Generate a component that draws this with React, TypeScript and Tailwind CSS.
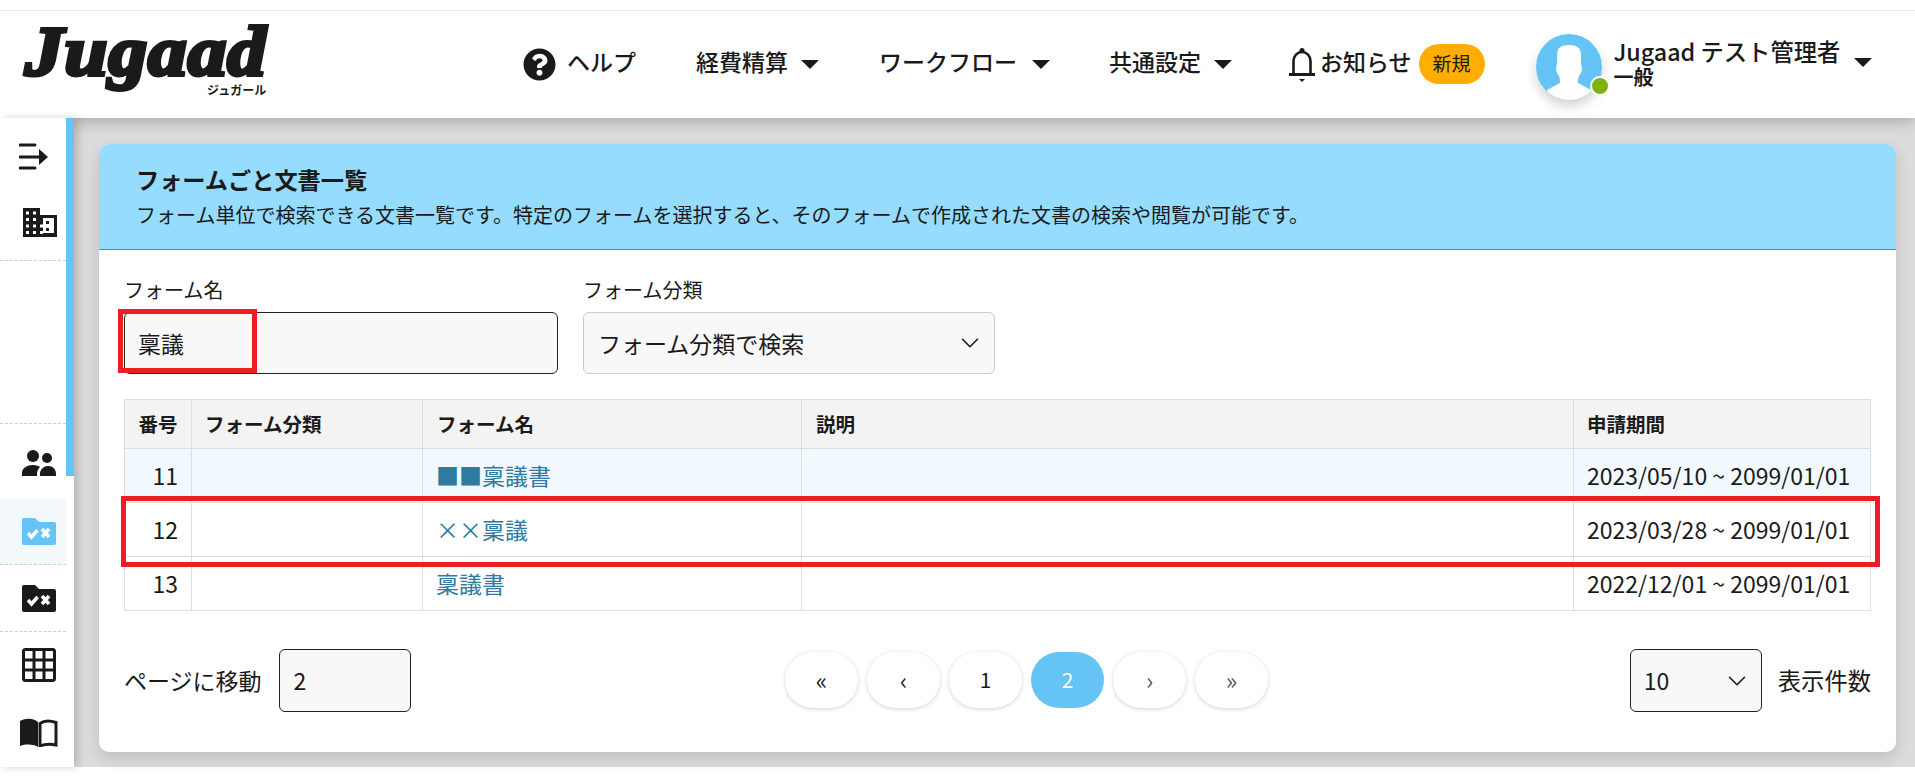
import { ChevronDown } from "lucide-react"
import { FaQuestionCircle } from "react-icons/fa"

const rows = [
  { no: 11, name: "■■稟議書", period: "2023/05/10 ~ 2099/01/01", bg: "bg-[#f1f9fe]" },
  { no: 12, name: "××稟議", period: "2023/03/28 ~ 2099/01/01", bg: "bg-white" },
  { no: 13, name: "稟議書", period: "2022/12/01 ~ 2099/01/01", bg: "bg-white" },
]

function Caret() {
  return <span className="w-0 h-0 border-l-[9px] border-r-[9px] border-t-[9px] border-l-transparent border-r-transparent border-t-[#1a1a1a]" />
}

function Avatar() {
  return (
    <div className="relative w-[66px] h-[66px] rounded-full shadow-[0_6px_12px_rgba(0,0,0,0.18)]">
      <svg viewBox="0 0 66 66" className="w-[66px] h-[66px]">
        <clipPath id="av">
          <circle cx="33" cy="33" r="33" />
        </clipPath>
        <g clipPath="url(#av)">
          <rect width="66" height="66" fill="#65c4f5" />
          <path
            d="M33 11c-8 0-12 3-12 10v7c0 3-1 5-1 7 0 3 2 5 3 7 1 3 1 5 1 7l-13 7v10h44V56l-13-7c0-2 0-4 1-7 1-2 3-4 3-7 0-2-1-4-1-7v-7c0-7-4-10-12-10z"
            fill="#fff"
          />
        </g>
      </svg>
      <span className="absolute left-[54px] top-[42px] w-[20px] h-[20px] rounded-full bg-[#7cb30f] border-2 border-white" />
    </div>
  )
}

function Header() {
  return (
    <header className="relative z-10 h-[108px] shrink-0 bg-white border-t border-[#e5e5e5] shadow-[0_2px_16px_rgba(0,0,0,0.28)] flex items-center text-[#1a1a1a]">
      <div className="w-[523px] shrink-0 pl-[25px] h-full relative overflow-hidden">
        <div className="font-['Liberation_Serif',serif] italic font-bold text-[70px] leading-[74px] tracking-[1px] mt-[4px] origin-left scale-x-[1.1] [-webkit-text-stroke:4px_#1a1a1a]">
          Jugaad
        </div>
        <div className="absolute left-[207px] top-[72px] text-[12px] leading-[14px] font-bold">ジュガール</div>
      </div>
      <FaQuestionCircle className="w-[33px] h-[33px] text-[#1a1a1a]" />
      <span className="ml-[11px] pb-[6px] text-[23px] font-medium w-[129px]">ヘルプ</span>
      <span className="pb-[6px] text-[23px] font-medium">経費精算</span>
      <span className="ml-[13px] mr-[60px] flex"><Caret /></span>
      <span className="pb-[6px] text-[23px] font-medium">ワークフロー</span>
      <span className="ml-[15px] mr-[59px] flex"><Caret /></span>
      <span className="pb-[6px] text-[23px] font-medium">共通設定</span>
      <span className="ml-[13px] mr-[57px] flex"><Caret /></span>
      <svg viewBox="0 0 26 36" className="w-[26px] h-[36px]">
        <path d="M4.5 27V14a8.5 9 0 0117 0v13" fill="none" stroke="currentColor" strokeWidth="2.6" />
        <circle cx="13" cy="3.5" r="2.5" fill="currentColor" />
        <path d="M0 26h26v3H0z" fill="currentColor" />
        <path d="M10 32h6l-3 3z" fill="currentColor" />
      </svg>
      <span className="ml-[5px] pb-[6px] text-[23px] font-medium">お知らせ</span>
      <span className="ml-[7px] w-[66px] h-[40px] mb-[2px] rounded-full bg-[#ffad00] flex items-center justify-center text-[19px]">新規</span>
      <div className="ml-[51px] mt-[4px]"><Avatar /></div>
      <div className="ml-[12px] flex flex-col w-[240px] -mt-[6px]">
        <span className="text-[23.3px] leading-[30px] font-medium whitespace-nowrap">Jugaad テスト管理者</span>
        <span className="text-[20px] leading-[22px] font-bold">一般</span>
      </div>
      <span className="flex -mt-[4px]"><Caret /></span>
    </header>
  )
}

function Sidebar() {
  return (
    <aside className="relative z-20 w-[74px] shrink-0 bg-white flex shadow-[4px_0_8px_rgba(0,0,0,0.18)]">
      <div className="w-[66px] flex flex-col text-[#1a1a1a]">
        <div className="h-[143px] border-b border-dashed border-[#ccc] flex flex-col pl-[19px]">
          <svg viewBox="0 0 30 28" className="w-[30px] h-[28px] mt-[25px]">
            <path d="M1 2h15M1 14h22M1 25h15" stroke="currentColor" strokeWidth="3" strokeLinecap="round" fill="none" />
            <path d="M20 6l9 8-9 8z" fill="currentColor" />
          </svg>
          <svg viewBox="0 0 34 29" className="w-[34px] h-[29px] mt-[37px] ml-[4px]">
            <path
              fillRule="evenodd"
              fill="currentColor"
              d="M0 0h17v7h17v22H0zM3 3.5v3h3v-3zm7 0v3h3v-3zM3 10v3h3v-3zm7 0v3h3v-3zM3 16.5v3h3v-3zm7 0v3h3v-3zm7 0v3h3v-3zM3 23v3h3v-3zm7 0v3h3v-3zm7 0v3h3v-3zM20 10v15h11V10z"
            />
            <path d="M23 13h3v3h-3zM23 20h3v3h-3z" fill="currentColor" />
          </svg>
        </div>
        <div className="h-[163px] border-b border-dashed border-[#ccc]" />
        <div className="h-[75px] flex items-center pl-[22px]">
          <svg viewBox="0 0 34 26" className="w-[34px] h-[26px] mt-[3px]">
            <circle cx="11" cy="6" r="6" fill="currentColor" />
            <circle cx="25" cy="8" r="5" fill="currentColor" />
            <path d="M0 26v-3c0-5 5-8 11-8 3 0 6 1 7 2-2 2-3 4-3 7v2zM18 26v-2c0-5 4-8 8-8 5 0 8 3 8 8v2z" fill="currentColor" />
          </svg>
        </div>
        <div className="h-[66px] bg-[#f3f9fb] border-b border-dashed border-[#ccc] flex items-center pl-[22px]">
          <svg viewBox="0 0 34 27" className="w-[34px] h-[27px]">
            <path d="M2 0h11l4 4h15a2 2 0 012 2v19a2 2 0 01-2 2H2a2 2 0 01-2-2V2a2 2 0 012-2z" fill="#65c4f5" />
            <path d="M6 15l3.5 4 6-7M20 11l7 8M27 11l-7 8" stroke="#fff" strokeWidth="3.5" fill="none" />
          </svg>
        </div>
        <div className="h-[67px] border-b border-dashed border-[#ccc] flex items-center pl-[22px]">
          <svg viewBox="0 0 34 27" className="w-[34px] h-[27px]">
            <path d="M2 0h11l4 4h15a2 2 0 012 2v19a2 2 0 01-2 2H2a2 2 0 01-2-2V2a2 2 0 012-2z" fill="currentColor" />
            <path d="M6 15l3.5 4 6-7M20 11l7 8M27 11l-7 8" stroke="#fff" strokeWidth="3.5" fill="none" />
          </svg>
        </div>
        <div className="pl-[22px] pt-[16px]">
          <svg viewBox="0 0 34 34" className="w-[34px] h-[34px]">
            <rect x="1.5" y="1.5" width="31" height="31" rx="2" fill="none" stroke="currentColor" strokeWidth="3" />
            <path d="M12 2v30M22 2v30M2 12h30M2 22h30" stroke="currentColor" strokeWidth="3" />
          </svg>
        </div>
        <div className="pl-[20px] pt-[36px]">
          <svg viewBox="0 0 38 29" className="w-[38px] h-[29px]">
            <path d="M0 3c6-3 13-3 18 1v25c-5-3-12-3-18-1z" fill="currentColor" />
            <path d="M20 5.5c4-3 10-3 16-1V27c-5-1-11-1-16 1z" fill="none" stroke="currentColor" strokeWidth="3" />
          </svg>
        </div>
      </div>
      <div className="w-[8px]">
        <div className="h-[358px] bg-[#65c4f5]" />
      </div>
    </aside>
  )
}

function Pagination() {
  const base = "w-[73px] h-[56px] rounded-full flex items-center justify-center bg-white shadow-[0_1px_4px_rgba(0,0,0,0.18)]"
  return (
    <div className="flex gap-[9px] absolute left-[661px] top-[3px]">
      <div className={base + " text-[#1a1a1a] text-[24px]"}>«</div>
      <div className={base + " text-[#1a1a1a] text-[24px]"}>‹</div>
      <div className={base + " text-[#1a1a1a] text-[21px]"}>1</div>
      <div className="w-[73px] h-[56px] rounded-full flex items-center justify-center bg-[#65c4f5] text-white text-[21px]">2</div>
      <div className={base + " text-[#555] text-[24px]"}>›</div>
      <div className={base + " text-[#555] text-[24px]"}>»</div>
    </div>
  )
}

export default function App() {
  return (
    <div className="h-screen overflow-hidden bg-white flex flex-col font-['Noto_Sans_CJK_JP','Noto_Sans',sans-serif] text-[#1a1a1a]">
      <div className="relative z-20 h-[10px] shrink-0 bg-white" />
      <Header />
      <div className="h-[649px] shrink-0 flex">
        <Sidebar />
        <main className="flex-1 bg-[#dcdcdc] pt-[26px] pl-[25px] pr-[20px]">
          <div className="h-[608px] bg-white rounded-[10px] overflow-hidden shadow-[0_6px_16px_rgba(0,0,0,0.14)]">
            <div className="h-[106px] bg-[#96dcff] border-b border-[#3a94c8] pl-[37px] pt-[19px]">
              <h1 className="text-[23.2px] leading-[32px] font-bold">フォームごと文書一覧</h1>
              <p className="text-[20px] leading-[32px] mt-[4px] whitespace-nowrap">フォーム単位で検索できる文書一覧です。特定のフォームを選択すると、そのフォームで作成された文書の検索や閲覧が可能です。</p>
            </div>
            <div className="pl-[25px] pr-[25px] pt-[24px]">
              <div className="flex gap-[25px]">
                <div>
                  <label className="block text-[20px] leading-[32px] mb-[6px]">フォーム名</label>
                  <div className="relative">
                    <div className="w-[434px] h-[62px] rounded-[6px] border border-[#222] bg-[#f8f8f8] pl-[13px] flex items-center text-[23px]">稟議</div>
                    <div className="absolute -left-[6px] -top-[3px] w-[139px] h-[64px] border-[5px] border-[#ee1c25]" />
                  </div>
                </div>
                <div>
                  <label className="block text-[20px] leading-[32px] mb-[6px]">フォーム分類</label>
                  <div className="w-[412px] h-[62px] rounded-[6px] border border-[#ccc] bg-[#f8f8f8] pl-[14px] pr-[9px] flex items-center justify-between text-[23px]">
                    フォーム分類で検索
                    <ChevronDown className="w-[30px] h-[30px]" strokeWidth={1.3} />
                  </div>
                </div>
              </div>
              <div className="relative mt-[25px]">
                <table className="table-fixed border-collapse w-[1746px]">
                  <colgroup>
                    <col className="w-[67px]" />
                    <col className="w-[231px]" />
                    <col className="w-[379px]" />
                    <col className="w-[772px]" />
                    <col className="w-[297px]" />
                  </colgroup>
                  <thead>
                    <tr className="h-[49px] bg-[#f3f3f3] text-[19.5px] font-bold text-left">
                      <th className="border border-[#dedede] text-center">番号</th>
                      <th className="border border-[#dedede] pl-[13px]">フォーム分類</th>
                      <th className="border border-[#dedede] pl-[14px]">フォーム名</th>
                      <th className="border border-[#dedede] pl-[14px]">説明</th>
                      <th className="border border-[#dedede] pl-[13px]">申請期間</th>
                    </tr>
                  </thead>
                  <tbody>
                    {rows.map((r) => (
                      <tr key={r.no} className={"h-[54px] text-[23px] " + r.bg}>
                        <td className="border border-[#dedede] text-right pr-[13px]">{r.no}</td>
                        <td className="border border-[#dedede]" />
                        <td className="border border-[#dedede] pl-[13px] text-[#2e7aa0]">{r.name}</td>
                        <td className="border border-[#dedede]" />
                        <td className="border border-[#dedede] pl-[13px] whitespace-nowrap">{r.period}</td>
                      </tr>
                    ))}
                  </tbody>
                </table>
                <div className="absolute -left-[3px] top-[97px] w-[1759px] h-[71px] border-[5px] border-[#ee1c25]" />
              </div>
              <div className="relative mt-[38px] flex items-center justify-between h-[63px]">
                <div className="flex items-center">
                  <span className="text-[23px]">ページに移動</span>
                  <div className="ml-[17px] w-[132px] h-[63px] rounded-[6px] border border-[#222] bg-[#f8f8f8] pl-[14px] flex items-center text-[23px]">2</div>
                </div>
                <Pagination />
                <div className="flex items-center">
                  <div className="w-[132px] h-[63px] rounded-[6px] border border-[#222] bg-[#f8f8f8] pl-[13px] pr-[9px] flex items-center justify-between text-[23px]">
                    10
                    <ChevronDown className="w-[30px] h-[30px]" strokeWidth={1.3} />
                  </div>
                  <span className="ml-[16px] text-[23.3px]">表示件数</span>
                </div>
              </div>
            </div>
          </div>
        </main>
      </div>
    </div>
  )
}
